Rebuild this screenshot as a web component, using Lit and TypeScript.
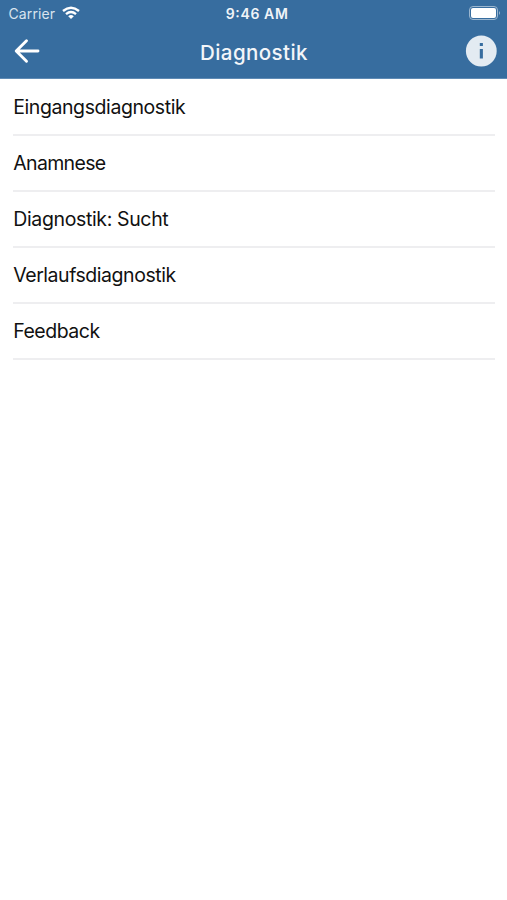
import { LitElement, html, css } from "lit";
import { customElement } from "lit/decorators.js";

const entries: [string, number][] = [
  ["Eingangsdiagnostik", 172.5],
  ["Anamnese", 93],
  ["Diagnostik: Sucht", 155.5],
  ["Verlaufsdiagnostik", 163],
  ["Feedback", 87],
];

@customElement("app-root")
class AppRoot extends LitElement {
  static styles = css`
    :host { display: block; height: 900px; background: #fff; font-family: Inter, sans-serif; color: #111; }
    header { height: 79px; box-sizing: border-box; background: #376d9f; border-bottom: 1px solid #5f8bb5; }
    .status { height: 27px; display: grid; grid-template-columns: 1fr auto 1fr; align-items: center; padding: 0 6px 0 8px; box-sizing: border-box; }
    .carrier { display: flex; align-items: center; gap: 6px; }
    .wifi { margin-bottom: 1px; }
    .battery { justify-self: end; margin-bottom: 1px; }
    .bar { height: 48px; display: grid; grid-template-columns: 1fr auto 1fr; align-items: center; padding: 0 10px 0 13px; }
    .info { justify-self: end; }
    svg { display: block; overflow: visible; }
    text { font-family: Inter, sans-serif; }
    ul { list-style: none; margin: 0; padding: 1px 12px 0 13px; }
    li { height: 56px; box-sizing: border-box; border-bottom: 2px solid #eeeef0; display: flex; align-items: center; }
  `;

  render() {
    return html`
      <header>
        <div class="status">
          <div class="carrier">
            <svg width="48" height="20"><text x="0.5" y="15.2" font-size="14" fill="#d9e4ee" textLength="46.5">Carrier</text></svg>
            <svg class="wifi" width="18" height="14" viewBox="0 0 18 14" fill="none" stroke="#fff" stroke-width="2.4"><path d="M1 5Q9-1.6 17 5M4 8.2Q9 4 14 8.2"/><path d="M6.2 10.2Q9 8 11.8 10.2L9 13Z" fill="#fff" stroke="none"/></svg>
          </div>
          <svg width="62" height="20"><text x="1.8" y="15.2" font-size="14" font-weight="600" fill="#f0f4f8" textLength="62">9:46 AM</text></svg>
          <svg class="battery" width="32" height="14" viewBox="0 0 32 14"><rect x=".5" y=".5" width="28" height="13" rx="3.5" fill="none" stroke="#9bb6cf"/><rect x="2" y="2" width="25" height="10" rx="2" fill="#fff"/><path d="M30 5q2 2 0 4Z" fill="#9bb6cf"/></svg>
        </div>
        <div class="bar">
          <svg width="28" height="26" viewBox="0 0 28 26" fill="none" stroke="#fff" stroke-width="2.9" stroke-linecap="round" stroke-linejoin="round"><path d="M25 13H3.5M13.5 2.7L3.2 13L13.5 23.3"/></svg>
          <svg width="108" height="30"><text x="-1" y="24" font-size="20.5" font-weight="500" fill="#f3f6f9" textLength="107.5">Diagnostik</text></svg>
          <svg class="info" width="32" height="32" viewBox="0 0 32 32"><circle cx="16.3" cy="16" r="15.4" fill="#e3ebf2"/><path d="M14.8 8h3.1v3.1h-3.1zM14.8 14h3.1v9.6h-3.1z" fill="#376d9f"/></svg>
        </div>
      </header>
      <ul>
        ${entries.map(([label, width]) => html`<li><svg width="240" height="30"><text x="0.2" y="22" font-size="19.5" fill="#111" textLength=${width}>${label}</text></svg></li>`)}
      </ul>
    `;
  }
}
